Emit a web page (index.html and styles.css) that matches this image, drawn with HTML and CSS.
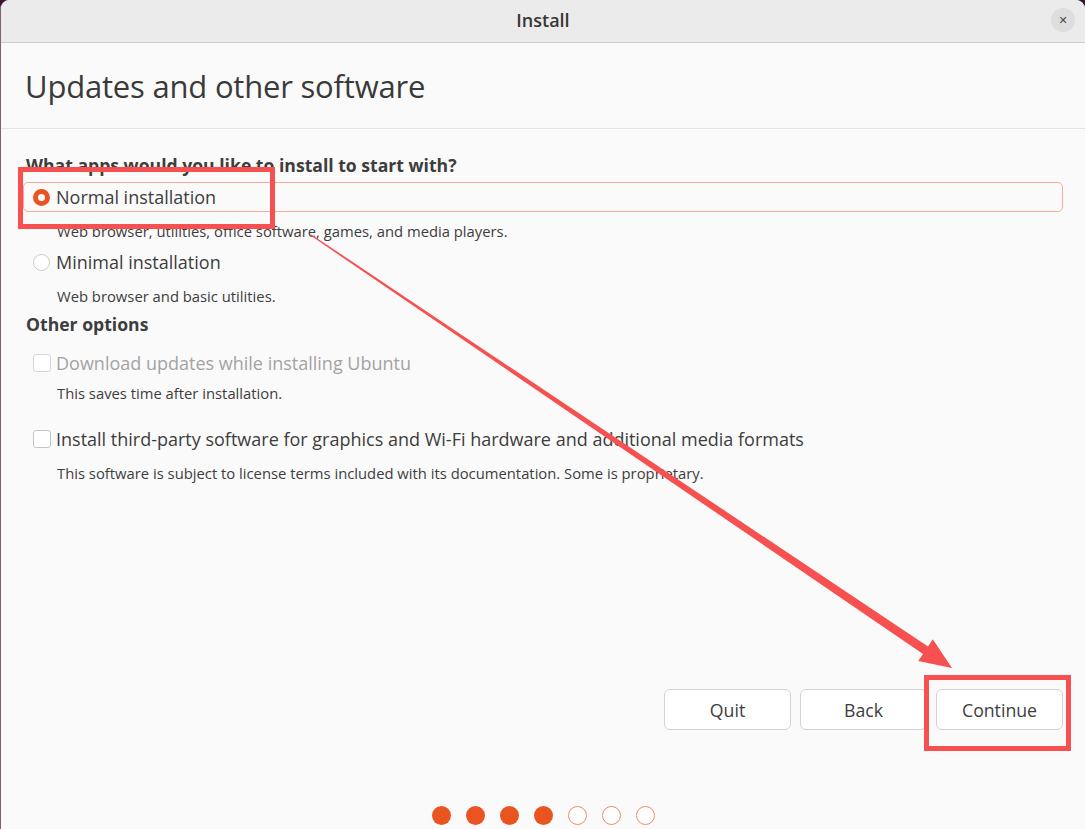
FILE: index.html
```html
<!DOCTYPE html>
<html lang="en">

<head>
    <meta charset="UTF-8">
    <title>Install</title>
    <link rel="stylesheet" href="styles.css">
</head>

<body>
    <div id="Window">
        <div class="titlebar">
            <span class="title">Install</span>
            <span class="close">&#x2715;</span>
        </div>

        <div class="page-header">
            <h1>Updates and other software</h1>
        </div>

        <div class="content">
            <p class="question">What apps would you like to install to start with?</p>

            <div class="option first selected">
                <span class="radio checked"></span>
                <span class="label">Normal installation</span>
            </div>
            <p class="desc desc-radio">Web browser, utilities, office software, games, and media players.</p>

            <div class="option">
                <span class="radio"></span>
                <span class="label">Minimal installation</span>
            </div>
            <p class="desc desc-radio">Web browser and basic utilities.</p>

            <p class="question other">Other options</p>

            <div class="option check-first disabled">
                <span class="checkbox"></span>
                <span class="label">Download updates while installing Ubuntu</span>
            </div>
            <p class="desc desc-check">This saves time after installation.</p>

            <div class="option check-second">
                <span class="checkbox"></span>
                <span class="label">Install third-party software for graphics and Wi-Fi hardware and additional media formats</span>
            </div>
            <p class="desc desc-last">This software is subject to license terms included with its documentation. Some is proprietary.</p>
        </div>

        <div class="actions">
            <button>Quit</button>
            <button>Back</button>
            <button>Continue</button>
        </div>

        <div class="steps">
            <span class="dot done"></span>
            <span class="dot done"></span>
            <span class="dot done"></span>
            <span class="dot done"></span>
            <span class="dot"></span>
            <span class="dot"></span>
            <span class="dot"></span>
        </div>
    </div>

    <!-- red markup drawn on top of the installer -->
    <div class="mark mark-option"></div>
    <div class="mark mark-continue"></div>
    <svg class="arrow" width="1085" height="829" viewBox="0 0 1085 829">
        <polygon fill="#f75050"
            points="311.4,234.4 928,646.5 932.8,639.3 952,668 918.2,660.9 923,654 310.6,235.6" />
    </svg>
</body>

</html>
```

FILE: styles.css
```css
body {
    margin: 0;
    background-color: #3b1530;
    font-family: "Open Sans", Lato, sans-serif;
    color: #3d3d3d;
    overflow: hidden;
}

#Window {
    height: 829px;
    background-color: #fafafa;
    border-left: 1px solid #7d6470;
    border-radius: 9px 9px 0 0;
    display: flex;
    flex-direction: column;
    overflow: hidden;
}

.titlebar {
    height: 42px;
    flex: none;
    background-color: #ebebeb;
    border-bottom: 1px solid #cdcdcd;
    display: flex;
    align-items: center;
    justify-content: center;
    position: relative;
}

.title {
    font-weight: 600;
    font-size: 18px;
    line-height: 20px;
    margin-top: -2px;
    color: #363636;
}

.close {
    position: absolute;
    right: 10px;
    top: 8px;
    width: 24px;
    height: 24px;
    border-radius: 50%;
    background-color: #dedede;
    color: #4a4a4a;
    font-size: 11px;
    font-family: "DejaVu Sans", sans-serif;
    display: flex;
    align-items: center;
    justify-content: center;
}

.page-header {
    height: 85px;
    flex: none;
    border-bottom: 1px solid #e3e3e3;
    display: flex;
    align-items: center;
    padding-left: 24px;
}

h1 {
    margin: 0;
    font-size: 31px;
    font-weight: normal;
    color: #3a3a3a;
    letter-spacing: -0.2px;
}

.content {
    flex: 1;
    padding: 24px 22px 0 22px;
}

p {
    margin: 0;
}

.question {
    height: 24px;
    line-height: 24px;
    padding-left: 3px;
    font-size: 17.6px;
    font-weight: bold;
}

.option {
    height: 30px;
    box-sizing: border-box;
    border: 1.5px solid transparent;
    border-radius: 5px;
    display: flex;
    align-items: center;
    padding-left: 9px;
    font-size: 18px;
}

.option.first {
    margin-top: 5px;
}

.option.selected {
    border-color: #f6ac92;
}

.option .label {
    margin-left: 6px;
}

.option .checkbox + .label {
    margin-left: 5px;
}

.radio {
    width: 17px;
    height: 17px;
    box-sizing: border-box;
    border-radius: 50%;
    border: 1px solid #c8c8c8;
    background-color: #ffffff;
}

.radio.checked {
    border: 5px solid #e95420;
}

.checkbox {
    width: 18px;
    height: 18px;
    box-sizing: border-box;
    border: 1px solid #c4c4c4;
    border-radius: 3px;
    background-color: #ffffff;
}

.disabled .checkbox {
    border-color: #d6d6d6;
}

.disabled .label {
    color: #a3a3a3;
}

.desc {
    padding-left: 34px;
    font-size: 14.8px;
    padding-top: 3px;
    height: 32px;
    line-height: 32px;
}

.option.check-first {
    margin-top: 12px;
}

.desc-check {
    padding-top: 0;
    height: 30px;
    line-height: 30px;
}

.option.check-second {
    margin-top: 16px;
}

.desc-last {
    padding-top: 4px;
    height: 30px;
    line-height: 30px;
}

.actions {
    flex: none;
    height: 41px;
    display: flex;
    justify-content: flex-end;
    gap: 9px;
    padding-right: 22px;
    margin-bottom: 76px;
}

button {
    width: 127px;
    height: 41px;
    border: 1px solid #d3d3d3;
    border-radius: 6px;
    background-color: #ffffff;
    font-family: inherit;
    font-size: 17.7px;
    color: #3d3d3d;
}

.steps {
    flex: none;
    display: flex;
    justify-content: center;
    gap: 15px;
    padding-bottom: 4px;
}

.dot {
    width: 19px;
    height: 19px;
    box-sizing: border-box;
    border-radius: 50%;
    border: 1.5px solid #f08a66;
    background-color: #ffffff;
}

.dot.done {
    border: none;
    background-color: #e95420;
}

/* annotation layer */
.mark {
    position: absolute;
    border: 5px solid #f75050;
    box-sizing: border-box;
}

.mark-option {
    left: 18px;
    top: 167px;
    width: 257px;
    height: 62px;
}

.mark-continue {
    left: 924px;
    top: 675px;
    width: 147px;
    height: 76px;
}

.arrow {
    position: absolute;
    left: 0;
    top: 0;
}
```
